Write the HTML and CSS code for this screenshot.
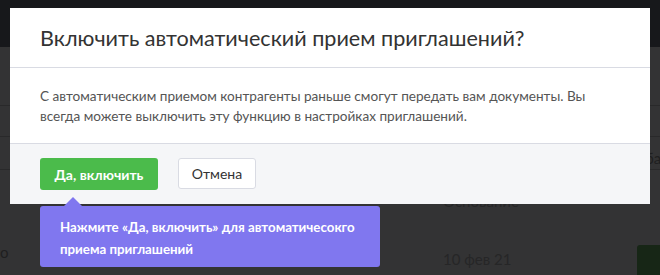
FILE: index.html
```html
<!DOCTYPE html>
<html lang="ru">
  <head>
    <meta charset="UTF-8" />
    <meta name="viewport" content="width=device-width, initial-scale=1.0" />
    <title>Приглашения</title>
    <link rel="stylesheet" href="styles.css">
  </head>
  <body>
    <div class="page">
      <div class="topbar"></div>
      <div class="list">
        <div class="row row-first"></div>
        <div class="row row-mid"></div>
        <div class="row row-third">
          <span class="cell-side">ба</span>
        </div>
        <div class="row-rest">
          <span class="cell-base">Основание</span>
          <span class="cell-left">о</span>
          <span class="cell-date">10 фев 21</span>
          <span class="cell-btn"></span>
        </div>
      </div>
    </div>

    <div class="overlay">
      <div class="modal">
        <div class="modal-header">
          <h2 class="modal-title">Включить автоматический прием приглашений?</h2>
        </div>
        <div class="modal-body">
          С автоматическим приемом контрагенты раньше смогут передать вам документы. Вы
          всегда можете выключить эту функцию в настройках приглашений.
        </div>
        <div class="modal-footer">
          <button class="btn btn-primary">Да, включить</button>
          <button class="btn btn-default">Отмена</button>
        </div>
      </div>
      <div class="hint">
        Нажмите «Да, включить» для автоматичесокго<br />приема приглашений
      </div>
    </div>
  </body>
</html>
```

FILE: styles.css
```css
* {
  margin: 0;
  padding: 0;
  box-sizing: border-box;
}

body {
  font-family: "Lato", "Open Sans", sans-serif;
  background: #333334;
  width: 660px;
  height: 275px;
  overflow: hidden;
  position: relative;
}

/* Dimmed page behind the dialog */
.topbar {
  height: 47px;
  background: #17181b;
}

.list {
  display: flex;
  flex-direction: column;
}

.row {
  border-bottom: 1px solid #29292a;
  position: relative;
}

.row-first {
  height: 59px;
}

.row-mid {
  height: 31px;
}

.row-third {
  height: 33px;
}

.row-rest {
  position: relative;
  height: 105px;
}

.cell-base,
.cell-date {
  position: absolute;
  left: 443px;
  font-size: 15px;
  color: #262627;
}

.cell-base {
  top: 22px;
}

.cell-date {
  top: 80px;
}

.cell-side {
  position: absolute;
  left: 645px;
  top: 12px;
  font-size: 15px;
  color: #1f1f20;
}

.cell-left {
  position: absolute;
  left: 0;
  top: 73px;
  font-size: 15px;
  color: #1f1f20;
}

.cell-btn {
  position: absolute;
  left: 637px;
  top: 75px;
  width: 30px;
  height: 40px;
  border-radius: 3px;
  background: #172616;
}

/* Dialog */
.overlay {
  position: absolute;
  left: 10px;
  top: 8px;
  width: 640px;
}

.modal {
  background: #ffffff;
}

.modal-header {
  height: 60px;
  padding: 17px 30px 0;
  border-bottom: 1px solid #d9dbe3;
}

.modal-title {
  font-size: 21.6px;
  font-weight: 400;
  color: #333333;
  white-space: nowrap;
}

.modal-body {
  padding: 18px 30px 18px;
  height: 75px;
  font-size: 13.6px;
  line-height: 20px;
  color: #555555;
}

.modal-footer {
  height: 61px;
  background: #f5f6f8;
  border-top: 1px solid #d9dbe3;
  padding: 14px 30px 0;
  display: flex;
  align-items: flex-start;
  gap: 20px;
}

.btn {
  font-family: inherit;
  font-size: 14px;
  height: 32px;
  padding: 0;
  border-radius: 3px;
  white-space: nowrap;
  cursor: pointer;
}

.btn-primary {
  background: #4bbb4b;
  color: #ffffff;
  font-weight: 700;
  border: none;
  width: 118px;
}

.btn-default {
  background: #ffffff;
  color: #333333;
  border: 1px solid #d9dbe3;
  width: 78px;
  height: 31px;
}

/* Onboarding hint under the primary button */
.hint {
  position: relative;
  margin: 2px 0 0 30px;
  width: 340px;
  height: 61px;
  padding: 10px 20px 0;
  background: #8077ef;
  border-radius: 3px;
  color: #ffffff;
  font-size: 13.3px;
  font-weight: 700;
  line-height: 22px;
  white-space: nowrap;
}

.hint::before {
  content: "";
  position: absolute;
  left: 23px;
  top: -9px;
  border-left: 10px solid transparent;
  border-right: 10px solid transparent;
  border-bottom: 10px solid #8077ef;
}
```
